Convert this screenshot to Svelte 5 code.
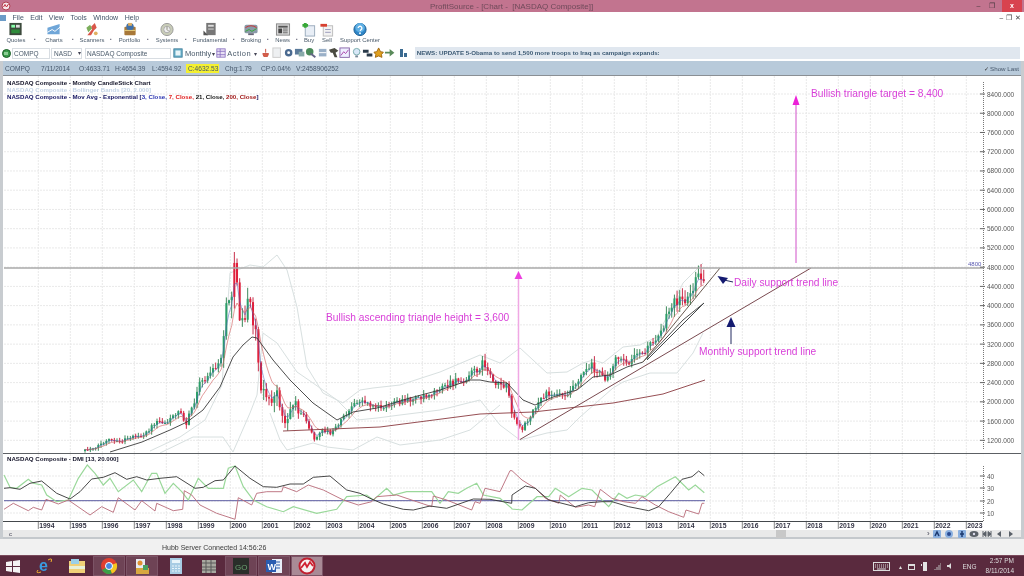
<script>
const yr = (y) => 38.3 + (y - 1994) * 32;
const years = Array.from({ length: 30 }, (_, i) => 1994 + i);
const priceTicks = Array.from({ length: 19 }, (_, i) => 8400 - i * 400);
const py = (p) => 94 + (8400 - p) * 0.0481;
const pts = (a) => { let s = []; for (let i = 0; i < a.length; i += 2) s.push(`${a[i].toFixed(1)},${a[i + 1].toFixed(1)}`); return s.join(' '); };
const zoom = (ox, oy, a) => a.map((v, i) => (i % 2 ? oy + v / 3 : ox + v / 3));

const path = [85,451,110,440,118,443,135,435,142,438,157,420,167,423,180,408,186,425,197,393,200,383,220,365,227,307,235,272,238,307,242,323,250,303,257,340,260,380,268,403,277,395,285,423,293,403,302,413,315,440,323,430,332,433,343,417,360,400,377,407,400,403,430,393,465,378,484,363,493,380,507,387,513,417,522,430,533,410,547,393,567,393,590,363,605,380,620,353,627,363,637,350,643,355,660,330,677,300,687,300,697,280,704,275];
function pathY(x) {
  for (let i = 0; i + 2 < path.length; i += 2) {
    if (x <= path[i + 2]) return path[i + 1] + ((x - path[i]) / (path[i + 2] - path[i])) * (path[i + 3] - path[i + 1]);
  }
  return path[path.length - 1];
}
let seed = 12345;
const rnd = () => ((seed = (seed * 1664525 + 1013904223) % 4294967296) / 4294967296);
const candles = [];
let prev = 451;
for (let x = 85; x <= 704; x += 2.667) {
  const base = pathY(x);
  const wild = x > 222 && x < 300 ? 2 : 1;
  const amp = (2.5 + 0.05 * (450 - base)) * wild;
  const close = base + (rnd() - 0.5) * amp * 1.3;
  const high = Math.min(prev, close) - rnd() * amp * 0.9 - 0.5;
  const low = Math.max(prev, close) + rnd() * amp * 0.9 + 0.5;
  candles.push({ x, open: prev, close, high, low, up: close < prev });
  prev = close;
}
candles.forEach((c) => { if (Math.abs(c.x - 235) < 1.4) { c.high = 252; c.up = false; } });
function ema(n) {
  const k = 2 / (n + 1); let e = candles[0].close; const o = [];
  candles.forEach((c) => { e = c.close * k + e * (1 - k); o.push(c.x, e); });
  return pts(o);
}
const ema3 = ema(3), ema7 = ema(7);
const ema21 = pts([110,452,142,442,170,430,187,422,203,410,220,387,233,357,243,345,252,337,257,338,273,360,290,380,313,403,337,420,353,412,377,408,410,398,440,390,470,380,480,380,490,382,507,383,523,400,535,405,553,397,577,390,593,377,610,375,627,367,643,362,667,337,683,320,704,303]);
const ema200 = pts([283,431,380,427,480,414,533,412,613,403,663,394,705,380]);
const bbU = pts([150,451,180,437,205,420,222,385,230,273,250,265,263,267,277,255,287,270,297,307,307,367,323,393,343,403,360,390,373,388,400,385,440,372,480,355,500,363,520,348,533,360,547,373,567,372,583,363,593,360,603,363,623,347,640,345,657,337,670,310,683,283,703,263]);
const bbL = pts([160,453,193,437,223,437,233,452,250,413,257,395,263,333,277,343,297,372,313,383,337,400,357,420,377,418,400,415,440,410,480,400,500,425,520,440,547,433,567,430,580,417,613,388,623,382,650,373,677,373,693,353,703,333]);
const bbL2 = pts([270,413,280,440,287,450,313,443,327,447,353,450,377,437,400,445,440,440,470,430,500,405]);

const green = [...zoom(0,450,[12,75,30,112,50,115,85,88,100,100,125,105,140,135,170,155,205,150,235,85,262,45,285,70,310,105,330,85,355,125,400,90,425,125,455,70,470,70,495,130,520,100,545,125,565,150,595,85,625,115,670,115,685,55,705,48,730,110,760,150,800,170,850,185,880,170,950,190,1010,178,1040,140,1100,135,1120,150,1160,115,1180,135,1220,125,1250,125,1295,125,1320,160,1345,125,1375,130,1400,115,1430,100,1450,135,1500,145,1535,175]),...zoom(512,450,[0,177,30,180,75,140,110,140,130,115,170,140,210,115,240,120,290,170,320,130,345,145,370,135,400,140,435,110,490,80,530,120,550,105,577,128])];
const black = [...zoom(0,450,[12,115,30,113,60,118,90,100,125,93,170,130,210,147,240,125,275,87,310,82,345,68,380,88,410,80,440,90,480,85,530,80,585,115,610,112,645,92,670,90,705,48,750,85,790,110,830,112,870,102,910,102,940,82,990,78,1040,120,1080,130,1110,145,1150,162,1210,178,1240,180,1290,168,1340,175,1420,147,1470,148,1535,160]),...zoom(512,450,[0,135,40,108,70,115,110,150,150,160,190,170,230,158,270,155,300,155,350,170,410,182,440,170,475,130,510,88,540,80,560,63,577,77])];
const red = [...zoom(0,450,[12,178,40,160,85,182,100,172,125,180,138,148,175,162,205,150,270,195,305,170,340,187,355,143,405,180,425,152,465,183,470,160,520,182,548,178,553,122,575,135,600,165,650,190,705,208,715,143,755,165,770,130,800,125,845,125,850,110,890,125,925,105,970,120,1030,150,1075,165,1115,155,1130,140,1190,135,1250,155,1295,170,1300,138,1340,150,1415,180,1425,155,1440,160,1455,115,1500,125,1530,62]),...zoom(512,450,[0,62,30,90,70,115,100,145,140,160,145,135,190,172,230,165,248,170,265,118,300,145,335,155,370,160,390,140,430,165,470,185,515,202,522,180,560,192,570,160,577,160])];

const menus = ['File', 'Edit', 'View', 'Tools', 'Window', 'Help'];
const info = [
  ['COMPQ', 36], ['7/11/2014', 38], ['O:4633.71', 36], ['H:4654.39', 37], ['L:4594.92', 34],
];
const info2 = [['Chg:1.79', 36], ['CP:0.04%', 35], ['V:2458906252', 80]];
const tools = [
  { n: 'Quotes', w: 32, arrow: true, i: '<rect x="3" y="1" width="13" height="13" fill="#3c4a3c"/><rect x="5" y="3" width="4" height="3" fill="#8fa"/><rect x="10" y="3" width="4" height="3" fill="#ddd"/><rect x="5" y="8" width="9" height="4" fill="#2e8b3a"/>' },
  { n: 'Charts', w: 32, arrow: true, i: '<path d="M3 6 L16 2 V13 H3Z" fill="#6fa6d8"/><path d="M3 11 L8 8 L11 10 L17 5" stroke="#fff" fill="none"/>' },
  { n: 'Scanners', w: 32, arrow: true, i: '<path d="M5 14 L10 8 L9 5 L13 1 L15 6 L12 9 L9 14Z" fill="#d9574a"/><path d="M4 6 L8 3 L10 7 L6 11Z" fill="#7cae5c"/><circle cx="14" cy="12" r="2" fill="#e0b060"/>' },
  { n: 'Portfolio', w: 31, arrow: true, i: '<rect x="4" y="5" width="12" height="9" rx="1" fill="#a87838"/><circle cx="10" cy="5" r="4" fill="#4070a8"/><rect x="8" y="1" width="4" height="3" fill="#e2b060"/><path d="M4 9H16" stroke="#e8d080"/>' },
  { n: 'Systems', w: 32, arrow: true, i: '<circle cx="10" cy="8" r="6.500" fill="#c9cdb8" stroke="#999"/><circle cx="10" cy="8" r="3.500" fill="#eee" stroke="#aaa"/><path d="M10 5V8L12 10" stroke="#887" fill="none"/>' },
  { n: 'Fundamental', w: 42, arrow: true, i: '<rect x="6" y="1" width="10" height="13" fill="#777"/><rect x="8" y="3" width="6" height="2" fill="#ddd"/><rect x="8" y="7" width="6" height="1" fill="#ddd"/><path d="M3 9 L8 14 H3Z" fill="#555"/>' },
  { n: 'Broking', w: 28, arrow: true, i: '<rect x="3" y="3" width="14" height="9" rx="2" fill="#8a9aa8"/><path d="M4 6 Q10 2 16 6" stroke="#c33" fill="none"/><path d="M4 10L8 8L11 10L16 7" stroke="#3a3" fill="none"/><rect x="7" y="12" width="6" height="2" fill="#667"/>' },
  { n: 'News', w: 23, arrow: true, i: '<rect x="3" y="2" width="14" height="12" fill="#d8d8d8" stroke="#888"/><rect x="5" y="4" width="10" height="2" fill="#555"/><rect x="5" y="7" width="4" height="5" fill="#444"/><rect x="10" y="7" width="5" height="1" fill="#666"/><rect x="10" y="9" width="5" height="1" fill="#666"/><rect x="10" y="11" width="5" height="1" fill="#666"/>' },
  { n: 'Buy', w: 18, i: '<rect x="6" y="4" width="10" height="11" fill="#e8eef6" stroke="#9ab"/><path d="M6 1V6M3 3.500H9" stroke="#38a838" stroke-width="3"/>' },
  { n: 'Sell', w: 18, i: '<rect x="6" y="4" width="10" height="11" fill="#f2f2f2" stroke="#bbb"/><path d="M3 3.500H10" stroke="#d84030" stroke-width="3"/><path d="M8 8H14M8 11H14" stroke="#99b"/>' },
  { n: 'Support Center', w: 48, i: '<circle cx="10" cy="8" r="6.500" fill="#2f86c8" stroke="#1a5c90"/><circle cx="10" cy="6" r="5" fill="#5fb0e4"/><path d="M8 6.500a2 2 0 1 1 3 1.800L10 9.500" stroke="#fff" stroke-width="1.400" fill="none"/><circle cx="10" cy="12" r="1" fill="#fff"/>' },
];
const smallIcons = [
  '<path d="M6 2V6M3 7H9L8 10H4Z" fill="#d8604a" stroke="#c85040"/>',
  '<rect x="2" y="1" width="8" height="10" fill="#eef0f2" stroke="#ccc"/>',
  '<circle cx="6" cy="6" r="4" fill="#4a6a90"/><circle cx="6" cy="6" r="1.500" fill="#fff"/>',
  '<rect x="1" y="2" width="8" height="6" fill="#5a7a9a"/><rect x="5" y="5" width="6" height="5" fill="#8aa"/>',
  '<circle cx="5" cy="5" r="4" fill="#4a8a5a"/><path d="M6 7L11 11" stroke="#668" stroke-width="2"/>',
  '<rect x="2" y="2" width="8" height="8" fill="#9ab0c8"/><path d="M2 6H10" stroke="#fff"/>',
  '<path d="M1 3L7 1L11 4L8 6L10 11L7 11L5 6L3 6Z" fill="#4a4a40"/>',
  '<rect x="1" y="1" width="10" height="10" fill="#eef" stroke="#86a"/><path d="M2 9L5 5L7 7L10 3" stroke="#a4a" fill="none"/>',
  '<circle cx="6" cy="5" r="3.500" fill="#d8e8f8" stroke="#7aa"/><rect x="4.500" y="9" width="3" height="2" fill="#789"/>',
  '<path d="M1 3H7V6H1ZM5 7H11V10H5Z" fill="#2a3a4a"/>',
  '<path d="M6 1L8 5L11 5.500L9 8L9.500 11L6 9.500L2.500 11L3 8L1 5.500L4 5Z" fill="#e0a020" stroke="#a06810"/>',
  '<path d="M1 5H6V2L11 6L6 10V7H1Z" fill="#5a8a5a"/>',
];
const navIcons = [
  '<rect x="1" y="1" width="8" height="8" rx="1" fill="#8ab0e0"/><path d="M3 7L5 3L7 7" stroke="#1c3a70" stroke-width="1.500" fill="none"/>',
  '<circle cx="5" cy="5" r="4" fill="#8ab0e0"/><circle cx="5" cy="5" r="2" fill="#2a4a90"/>',
  '<rect x="1" y="1" width="8" height="8" rx="1" fill="#8ab0e0"/><path d="M5 2V8M3 5H7" stroke="#1c3a70" stroke-width="1.500"/>',
  '<ellipse cx="5" cy="5" rx="4.500" ry="3" fill="#5a6068"/><circle cx="5" cy="5" r="1.200" fill="#dde"/>',
  '<path d="M1 2V8M9 2V8M1 5L4 2.500V7.500ZM9 5L6 2.500V7.500Z" fill="#5a6068" stroke="#5a6068"/>',
  '<path d="M7 2L3 5L7 8Z" fill="#5a6068"/>',
  '<path d="M3 2L7 5L3 8Z" fill="#5a6068"/>',
];
const taskIcons = [
  { k: 'ie', box: false }, { k: 'folder', box: false }, { k: 'chrome', box: true }, { k: 'files', box: true },
  { k: 'calc', box: false }, { k: 'film', box: false }, { k: 'go', box: true }, { k: 'word', box: true }, { k: 'ps', box: true, on: true },
];
</script>

<div class="app">
  <header class="title">
    <svg class="appicon" width="10" height="10" viewBox="0 0 10 10"><circle cx="5" cy="5" r="4" fill="#f6e6ea" stroke="#b04050"/><path d="M2.500 6L4 3.500L5.500 6L7.500 3" stroke="#c03040" fill="none"/></svg>
    <span class="title-text">ProfitSource - [Chart -  [NASDAQ Composite]]</span>
    <div class="winbtns">
      <span class="wb">–</span><span class="wb">❐</span><span class="wb close">x</span>
    </div>
  </header>

  <nav class="menu">
    <svg width="6" height="8" viewBox="0 0 6 8"><rect y="1" width="6" height="6" fill="#6c9cc8"/></svg>
    {#each menus as m}<span>{m}</span>{/each}
    <div class="mdi"><span>–</span><span>❐</span><span>✕</span></div>
  </nav>

  <div class="toolbar">
    {#each tools as t}
      <div class="tool" style:width="{t.w}px">
        <svg width="20" height="16" viewBox="0 0 20 16">{@html t.i}</svg>
        <span>{t.n}</span>
      </div>
      {#if t.arrow}<span class="sep">▪</span>{/if}
    {/each}
  </div>

  <div class="symbols">
    <svg class="go" width="9" height="9" viewBox="0 0 9 9"><circle cx="4.500" cy="4.500" r="4" fill="#3a9a4a" stroke="#1c5c28"/><path d="M3 3V6M5 3V6" stroke="#dfd"/></svg>
    <div class="field f1">COMPQ</div>
    <div class="field f2">NASD<span class="caret">▾</span></div>
    <div class="field f3">NASDAQ Composite</div>
    <svg class="mini" width="10" height="10" viewBox="0 0 12 12"><rect x="1" y="1" width="10" height="10" fill="#6ab0c8" stroke="#3a7a98"/><rect x="3" y="3" width="6" height="6" fill="#e8f4f8"/></svg>
    <span class="drop d1">Monthly</span><span class="caret">▾</span>
    <svg class="mini m2" width="10" height="10" viewBox="0 0 12 12"><rect x="1" y="1" width="10" height="10" fill="#e8e0f4" stroke="#8a70c0"/><path d="M1 4H11M1 8H11M5 1V11" stroke="#8a70c0"/></svg>
    <span class="drop d2">Action</span><span class="caret">▾</span>
    <div class="smalls">
      {#each smallIcons as ic}<svg width="11.300" height="11.300" viewBox="0 0 12 12">{@html ic}</svg>{/each}
    </div>
    <svg class="newsic" width="9" height="10" viewBox="0 0 9 10"><path d="M1 1H4V9H1ZM5 5H8V9H5Z" fill="#3a6a90"/></svg>
    <div class="news">NEWS: UPDATE 5-Obama to send 1,500 more troops to Iraq as campaign expands:</div>
  </div>

  <section class="panel">
    <div class="infobar">
      <div class="infoitems">
        {#each info as [t, w]}<span style:width="{w}px">{t}</span>{/each}
        <span class="close-val">C:4632.53</span>
        {#each info2 as [t, w]}<span style:width="{w}px">{t}</span>{/each}
      </div>
      <label class="showlast"><span class="tick">✓</span> Show Last</label>
    </div>

    <svg class="chart" width="1018" height="455" viewBox="3 75 1018 455">
      <rect x="3" y="75" width="1018" height="455" fill="#fff" />
      <g class="grid">
        {#each years as y}<line x1={yr(y)} x2={yr(y)} y1="76" y2="521" />{/each}
        {#each priceTicks as p}<line x1="4" x2="982" y1={py(p)} y2={py(p)} />{/each}
        {#each [476, 488, 501, 513] as y}<line x1="4" x2="982" y1={y} y2={y} />{/each}
      </g>
      <line x1="3" x2="1021" y1="75.500" y2="75.500" stroke="#8a8f94" />

      <polyline class="bb" points={bbU} />
      <polyline class="bb" points={bbL} />
      <polyline class="bb" points={bbL2} />

      {#each candles as c}
        <line x1={c.x} x2={c.x} y1={c.high} y2={c.low} stroke={c.up ? '#3f8a5c' : '#c8304c'} />
        <rect x={c.x - 1} y={Math.min(c.open, c.close)} width="2" height={Math.max(Math.abs(c.open - c.close), 1)} fill={c.up ? '#2c9e6a' : '#e0203c'} />
      {/each}

      <polyline class="l" points={ema3} stroke="#4458b8" opacity="0.55" />
      <polyline class="l" points={ema7} stroke="#d06060" opacity="0.7" />
      <polyline class="l" points={ema21} stroke="#3a3a3a" />
      <polyline class="l" points={ema200} stroke="#8a3a40" />

      <line x1="520" y1="439.500" x2="811" y2="268" stroke="#7a4a50" />
      <line x1="643" y1="362" x2="720" y2="268" stroke="#6a5a50" />
      <line x1="647" y1="360" x2="704" y2="303" stroke="#44484a" />

      <line x1="4" x2="983" y1="268" y2="268" stroke="#aaaaaa" stroke-width="1.500" />
      <text x="968" y="266" class="t4800">4800</text>

      <line x1="518.500" y1="278" x2="518.500" y2="440" stroke="#f0a8e4" stroke-width="1.500" />
      <path d="M518.500 271 L522.500 279 H514.500Z" fill="#ec3fe0" />
      <line x1="796" y1="104" x2="796" y2="263" stroke="#d050c8" />
      <path d="M796 95 L799.500 105 H792.500Z" fill="#ec20d8" />
      <line x1="731" y1="326" x2="731" y2="344" stroke="#222a60" />
      <path d="M731 317 L735.500 327 H726.500Z" fill="#141a70" />
      <line x1="724" y1="280" x2="733" y2="282" stroke="#222a60" />
      <path d="M717.500 276 L728 278 L723 284Z" fill="#141a70" />

      <text class="note" x="811" y="97">Bullish triangle target = 8,400</text>
      <text class="note" x="326" y="321">Bullish ascending triangle height = 3,600</text>
      <text class="note" x="734" y="286">Daily support trend line</text>
      <text class="note" x="699" y="354.500">Monthly support trend line</text>

      <text class="leg" x="7" y="84.500" fill="#15152a">NASDAQ Composite - Monthly CandleStick Chart</text>
      <text class="leg" x="7" y="91.500" fill="#c4d4e6">NASDAQ Composite - Bollinger Bands [20, 2.000]</text>
      <text class="leg" x="7" y="98.500" fill="#141460">NASDAQ Composite - Mov Avg - Exponential <tspan>[</tspan><tspan fill="#2a34b0">3, Close,</tspan> <tspan fill="#e02020">7, Close,</tspan> <tspan fill="#111">21, Close,</tspan> <tspan fill="#a01818">200, Close</tspan><tspan fill="#141460">]</tspan></text>

      <line x1="983.500" x2="983.500" y1="82" y2="450" class="axis" />
      {#each priceTicks as p}
        <line x1="980" x2="985" y1={py(p)} y2={py(p)} stroke="#666" />
        <text class="ax" x="987" y={py(p) + 2.500}>{p}.000</text>
      {/each}

      <line x1="3" x2="1021" y1="453.500" y2="453.500" stroke="#5c6064" />
      <text class="leg" x="7" y="461" fill="#15152a">NASDAQ Composite - DMI [13, 20.000]</text>

      <line x1="4" x2="705" y1="500.700" y2="500.700" stroke="#5a5aa0" />
      <polyline class="l g" points={pts(green)} stroke="#9ad89a" />
      <polyline class="l" points={pts(red)} stroke="#b86a78" />
      <polyline class="l" points={pts(black)} stroke="#333" />

      <line x1="983.500" x2="983.500" y1="466" y2="521" class="axis" />
      {#each [[40, 476], [30, 488], [20, 501], [10, 513]] as [v, y]}
        <line x1="980" x2="985" y1={y} y2={y} stroke="#666" />
        <text class="ax" x="987" y={y + 2.500}>{v}</text>
      {/each}

      <line x1="3" x2="983" y1="521.500" y2="521.500" stroke="#44484c" />
      {#each years as y}
        <line x1={yr(y)} x2={yr(y)} y1="522" y2="529" stroke="#888" />
        <text class="yr" x={yr(y) + 1} y="527.500">{y}</text>
      {/each}
    </svg>

    <div class="scrollrow">
      <span class="c">c</span>
      <span class="thumb"></span>
      <div class="navs">
        <span class="chev">›</span>
        {#each navIcons as ic}
          <svg width="10" height="10" viewBox="0 0 10 10">{@html ic}</svg>
        {/each}
      </div>
    </div>
  </section>

  <div class="status"><span>Hubb Server Connected 14:56:26</span></div>

  <footer class="taskbar">
    <svg class="winlogo" width="14" height="13" viewBox="0 0 14 13"><path d="M0 2L6 1V6H0ZM7 1L14 0V6H7ZM0 7H6V12L0 11ZM7 7H14V13L7 12Z" fill="#f4f2f3"/></svg>
    {#each taskIcons as t}
      <div class="task" class:box={t.box} class:on={t.on}>
        <svg width="18" height="18" viewBox="0 0 18 18">
          {#if t.k === 'ie'}
            <text x="4" y="14" class="ie">e</text><path d="M3 13Q0 17 6 15M13 3Q18 0 16 5" stroke="#f0b030" fill="none"/>
          {:else if t.k === 'folder'}
            <rect x="1" y="4" width="16" height="12" fill="#f0d078"/><rect x="3" y="2" width="8" height="5" fill="#9ad0e8"/><rect x="1" y="9" width="16" height="3" fill="#e8f0d8"/>
          {:else if t.k === 'chrome'}
            <circle cx="9" cy="9" r="8" fill="#e04030"/><path d="M9 9L2 13A8 8 0 0 0 12 16.500Z" fill="#3aa048"/><path d="M9 9L12 16.500A8 8 0 0 0 16.500 6Z" fill="#f4c820"/><circle cx="9" cy="9" r="3.500" fill="#4a88e0" stroke="#fff"/>
          {:else if t.k === 'files'}
            <rect x="3" y="2" width="9" height="11" fill="#e8ecf4"/><rect x="3" y="11" width="13" height="6" fill="#d8a840"/><circle cx="7" cy="6" r="2.500" fill="#e09030"/><rect x="10" y="8" width="5" height="5" fill="#4aa060"/>
          {:else if t.k === 'calc'}
            <rect x="3" y="1" width="12" height="16" fill="#a8cce4"/><rect x="5" y="3" width="8" height="3" fill="#e8f4fa"/><path d="M5 9H13M5 11.500H13M5 14H13" stroke="#e8f4fa" stroke-dasharray="2 1"/>
          {:else if t.k === 'film'}
            <rect x="2" y="3" width="14" height="13" fill="#a8a8a0"/><path d="M2 6H16M2 10H16M2 13H16M6 3V16M11 3V16" stroke="#5a5a5a"/>
          {:else if t.k === 'go'}
            <rect x="1" y="1" width="16" height="16" fill="#2a2e2a"/><text x="3" y="12.500" class="gotxt">GO</text>
          {:else if t.k === 'word'}
            <rect x="7" y="2" width="10" height="14" fill="#e8eef8"/><path d="M9 5H15M9 8H15M9 11H15" stroke="#2a5aa8"/><rect x="1" y="3" width="10" height="12" fill="#2a5cb0"/><text x="2.500" y="12.500" class="wtxt">W</text>
          {:else}
            <circle cx="9" cy="9" r="7.500" fill="#f6f0f0" stroke="#c02030" stroke-width="2"/><path d="M3 11L7 6L9 10L12 5L15 9" stroke="#d02030" stroke-width="1.800" fill="none"/>
          {/if}
        </svg>
      </div>
    {/each}
    <div class="tray">
      <svg width="17" height="9" viewBox="0 0 17 9"><rect x=".5" y=".5" width="16" height="8" fill="#5c2e40" stroke="#ddd"/><path d="M2 3H15M2 5H15" stroke="#ddd" stroke-dasharray="1 1"/><path d="M4 7H13" stroke="#ddd"/></svg>
      <span class="up">▴</span>
      <svg width="7" height="7" viewBox="0 0 7 7"><rect x=".5" y="1.500" width="6" height="5" fill="none" stroke="#ddd"/><rect y="1" width="7" height="2" fill="#ddd"/></svg>
      <svg width="7" height="9" viewBox="0 0 7 9"><rect x="2" y="0" width="4" height="9" fill="#e4e4e4"/><rect y="2" width="1" height="2" fill="#e4e4e4"/></svg>
      <svg width="7" height="7" viewBox="0 0 7 7"><path d="M1 7V6M3 7V4M5 7V2M7 7V0" stroke="#bbb"/></svg>
      <svg width="6" height="8" viewBox="0 0 6 8"><path d="M0 3H2L4 1V7L2 5H0Z" fill="#ddd"/></svg>
      <span class="eng">ENG</span>
      <div class="clock"><span>2:57 PM</span><span>8/11/2014</span></div>
    </div>
  </footer>
</div>

<style>
  :global(body) { margin: 0; background: #fff; }
  .app {
    width: 1024px; height: 576px; overflow: hidden;
    display: flex; flex-direction: column;
    font-family: "Liberation Sans", Arial, sans-serif;
    background: #fff; filter: blur(0.3px);
  }
  .title {
    height: 12px; flex: none; background: #c2748f;
    display: flex; align-items: center; padding-left: 1px;
  }
  .title-text { margin-left: 419px; font-size: 8px; color: #6f4a5a; white-space: pre; }
  .winbtns { margin-left: auto; display: flex; align-items: center; height: 12px; margin-right: 2px; }
  .wb { width: 13px; text-align: center; font-size: 7px; color: #4a3a40; line-height: 12px; }
  .wb.close { width: 20px; margin-left: 4px; background: #d8434f; color: #fff; font-weight: 700; }
  .menu {
    height: 11px; flex: none; background: #fff; display: flex; align-items: center;
    font-size: 7px; color: #44566a; gap: 6.500px;
  }
  .mdi { margin-left: auto; display: flex; gap: 3px; padding-right: 3px; font-size: 6.500px; color: #444; }
  .toolbar { height: 22px; flex: none; display: flex; align-items: flex-start; background: #fff; }
  .tool { display: flex; flex-direction: column; align-items: center; flex: none; font-size: 5.900px; color: #4a5a6a; line-height: 7px; white-space: nowrap; }
  .tool svg { margin-top: -1px; height: 15px; }
  .sep { width: 6px; flex: none; font-size: 5px; line-height: 32px; text-align: center; color: #778; }
  .symbols { height: 16px; flex: none; display: flex; align-items: center; background: #fff; font-size: 7.500px; color: #4a5a6a; }
  .go { margin-left: 2px; flex: none; }
  .field { height: 11px; box-sizing: border-box; border: 1px solid #d8dde2; font-size: 6.500px; line-height: 9px; padding-left: 1px; background: #fff; display: flex; justify-content: space-between; flex: none; }
  .f1 { width: 38px; margin-left: 1px; }
  .f2 { width: 31px; margin-left: 1px; padding-left: 2px; }
  .f3 { width: 86px; margin-left: 3px; }
  .caret { font-size: 6px; color: #445; }
  .mini { margin-left: 2px; flex: none; }
  .d1 { margin: 0 1px 0 2px; }
  .d2 { margin: 0 3px 0 1px; letter-spacing: 0.500px; }
  .m2 { margin-left: 1px; }
  .smalls { display: flex; margin-left: 3px; flex: none; }
  .newsic { margin-left: 3px; flex: none; }
  .news {
    width: 605px; height: 12px; margin-left: 7px; flex: none; background: #e0e7ef;
    font-size: 6.200px; font-weight: 700; color: #3c5a74; line-height: 12px; padding-left: 2px; box-sizing: border-box; white-space: nowrap;
  }
  .panel { flex: none; padding: 0 3px; background: #c8ccd0; height: 478px; display: flex; flex-direction: column; }
  .infobar { height: 14px; flex: none; background: #b8cada; display: flex; align-items: center; justify-content: space-between; font-size: 6.600px; color: #45566a; padding: 0 2px; }
  .infoitems { display: flex; align-items: center; }
  .infoitems span { flex: none; white-space: nowrap; }
  .close-val { background: #f4f030; padding: 1px 2px; margin-right: 6px; width: 33px; box-sizing: border-box; }
  .showlast { display: flex; align-items: center; gap: 1px; white-space: nowrap; font-size: 6.200px; }
  .tick { font-size: 6px; color: #333; }
  .chart { display: block; flex: none; }
  .grid line { stroke: #e9e9e9; stroke-dasharray: 2 1; }
  .bb { fill: none; stroke: #d8e0e0; stroke-width: 1; }
  .l { fill: none; stroke-width: 0.900; }
  .g { stroke-width: 1.200; }
  .axis { stroke: #777; stroke-dasharray: 1 1; }
  .t4800 { font-size: 6px; fill: #5858b0; }
  .note { font-size: 10.200px; fill: #d83fd8; }
  .leg { font-size: 6.150px; font-weight: 700; }
  .ax { font-size: 6.500px; fill: #555; }
  .yr { font-size: 6.800px; font-weight: 700; fill: #334; }
  .scrollrow { height: 7px; flex: none; background: #e9e9e9; display: flex; align-items: center; font-size: 6px; color: #445; padding-left: 6px; border-bottom: 2px solid #c4c8cc; }
  .thumb { width: 10px; height: 8px; background: #c8c8c8; margin-left: 764px; flex: none; }
  .navs { display: flex; align-items: center; gap: 2.400px; margin-left: 141px; }
  .chev { font-size: 8px; line-height: 8px; }
  .status { height: 16px; flex: none; background: #f1f1f1; font-size: 7px; color: #3a3a3a; display: flex; align-items: center; padding-left: 162px; }
  .taskbar { height: 21px; flex: none; background: #5a2a3e; border-top: 1px solid #7a4a5c; box-sizing: border-box; display: flex; align-items: center; }
  .winlogo { margin: 0 7px 0 6px; flex: none; }
  .task { width: 33px; height: 20px; display: flex; align-items: center; justify-content: center; flex: none; box-sizing: border-box; }
  .task.box { background: #6e4355; border: 1px solid #7c5466; width: 32px; margin-right: 1px; }
  .task.on { background: #a98a96; }
  .ie { font-size: 16px; font-weight: 700; fill: #3a9ae0; font-family: "Liberation Sans", sans-serif; }
  .gotxt { font-size: 8px; fill: #6aa070; }
  .wtxt { font-size: 9px; font-weight: 700; fill: #fff; }
  .tray { margin-left: auto; display: flex; align-items: center; gap: 6px; color: #ddd; font-size: 7px; padding-right: 10px; }
  .up { font-size: 6px; margin-left: 3px; }
  .eng { margin-left: 3px; font-size: 6.500px; }
  .clock { display: flex; flex-direction: column; align-items: flex-end; margin-left: 3px; line-height: 10px; font-size: 6.500px; }
</style>
